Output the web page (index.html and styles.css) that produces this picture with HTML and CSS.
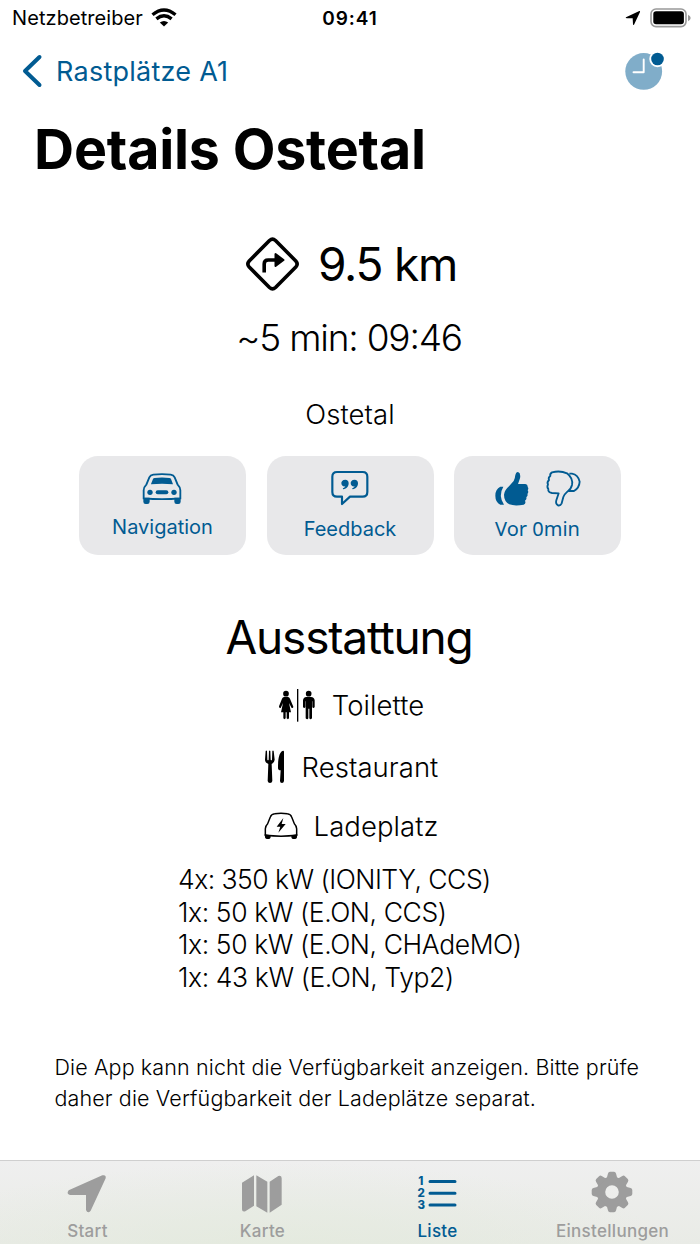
FILE: index.html
```html
<!DOCTYPE html>
<html lang="de">
<head>
<meta charset="utf-8">
<title>Details Ostetal</title>
<link rel="stylesheet" href="styles.css">
</head>
<body>
<div class="app">
  <header class="status">
    <div class="carrier"><span>Netzbetreiber</span>
      <svg width="26" height="20" viewBox="0 0 26 20" fill="none" stroke="#000" stroke-width="3.4"><path d="M1.500 6.800Q13-2.600 24.500 6.800M5.400 10.900Q13 4.800 20.600 10.900"/><path d="M13 18.500L8.800 14.400Q13 11.400 17.200 14.400Z" fill="#000" stroke="none"/></svg>
    </div>
    <div class="clock">09:41</div>
    <div class="power">
      <svg width="16" height="16" viewBox="0 0 48 48"><path d="M3 22L43 3Q46 2 45 6L27 44Q25 47 24 43L23 25L5 25Q0 24 3 22Z"/></svg>
      <svg width="41" height="20" viewBox="0 0 41 20"><rect x="1" y="1" width="35" height="17.600" rx="5" fill="none" stroke="#999" stroke-width="1.600"/><rect x="3.300" y="3.300" width="30.600" height="13" rx="2.800"/><path d="M38 6.800Q40.700 8 40.700 10T38 13.200Z" fill="#999"/></svg>
    </div>
  </header>
  <nav class="topbar">
    <a class="back"><svg width="20" height="32" viewBox="0 0 20 32" fill="none" stroke="#015b92" stroke-width="4" stroke-linecap="round" stroke-linejoin="round"><path d="M17.500 2L3 16L17.500 30"/></svg><span>Rastplätze A1</span></a>
    <svg width="40" height="40" viewBox="0 0 40 40"><circle cx="18.700" cy="20.400" r="18.400" fill="#80adc9"/><path d="M18.700 8.500V21.300H8.500" fill="none" stroke="#fff" stroke-width="1.900" stroke-linecap="round" stroke-linejoin="round"/><circle cx="32.500" cy="8" r="8.200" fill="#fff"/><circle cx="32.500" cy="8" r="6.300" fill="#015b92"/></svg>
  </nav>
  <h1 class="title">Details Ostetal</h1>
  <section class="distance">
    <svg width="53" height="54" viewBox="0 0 53 54" fill="none" stroke="#000" stroke-width="3.600" stroke-linejoin="round"><path d="M23.500 3.500Q26.500 .8 29.500 3.500L49.800 24Q52.500 27 49.800 30L29.500 50.500Q26.500 53.200 23.500 50.500L3.200 30Q.5 27 3.200 24Z"/><path d="M18.200 35.500V27Q18.200 23 22.200 23H30"/><path d="M29.500 17V29L37.500 23Z" fill="#000" stroke-width="2"/></svg>
    <span>9.5 km</span>
  </section>
  <p class="eta">~5 min: 09<span class="colon">:</span>46</p>
  <p class="place">Ostetal</p>
  <section class="actions">
    <button class="action">
      <svg class="car" width="40" height="32" viewBox="0 0 120 96" fill="#015b92"><path d="M5 72V52Q5 43 13 35L22 13Q25 6 34 5Q60 2 86 5Q95 6 98 13L107 35Q115 43 115 52V76Q60 81 5 76Z" fill="none" stroke="#015b92" stroke-width="5.500"/><path d="M27 33L33 18Q34 15 38 15Q60 12 82 15Q86 15 87 18L93 34Q60 30 27 34Z"/><circle cx="24" cy="58" r="8"/><circle cx="96" cy="58" r="8"/><rect x="41" y="52" width="38" height="12" rx="6"/><path d="M4 74H23V86Q23 93 16 93H11Q4 93 4 86ZM97 74H116V86Q116 93 109 93H104Q97 93 97 86Z"/></svg>
      <span class="label-nav">Navigation</span>
    </button>
    <button class="action">
      <svg class="bubble" width="38" height="36" viewBox="0 0 114 108" fill="#015b92"><path d="M18 6H95Q109 6 109 20V66Q109 80 95 80H57L33 102V80H18Q4 80 4 66V20Q4 6 18 6Z" fill="none" stroke="#015b92" stroke-width="6.500" stroke-linejoin="round"/><path id="quote" d="M43 29C34 29 31 35 31 39C31 46 37 51 43 49Q41 54 36 55Q34 58 38 58C50 55 53 46 53 40C53 33 49 29 43 29Z"/><use href="#quote" x="28"/></svg>
      <span class="label-feed">Feedback</span>
    </button>
    <button class="action">
      <svg class="thumbs" width="88" height="38" viewBox="0 0 264 114"><g fill="#015b92"><path d="M51 52L65 36Q69 29 70 18Q72 8 78 9Q87 12 84 28L78 45H100Q108 46 107 54Q111 58 107 64Q111 69 106 75Q109 80 103 85Q105 90 99 95Q103 104 95 107Q68 112 52 106Q36 97 36 77Q37 64 51 52Z"/><path d="M34 53Q18 80 36 107H25Q10 100 10 80Q10 60 25 53Z"/></g><g fill="none" stroke="#015b92" stroke-width="5.500" stroke-linejoin="round"><path d="M180 10Q205 4 225 13Q244 28 240 48Q237 61 226 68Q218 75 214 84L209 103Q205 111 198 109Q190 105 193 94L200 73L180 72Q167 70 169 60Q164 54 168 46Q164 40 171 33Q168 25 175 21Q173 14 180 10Z"/><path d="M232 14H240Q258 17 263 38Q262 57 246 66H229"/></g></svg>
      <span class="label-ago">Vor 0min</span>
    </button>
  </section>
  <h2 class="heading">Ausstattung</h2>
  <ul class="amenities">
    <li class="toilet"><svg width="38" height="34" viewBox="0 0 114 102"><circle cx="24" cy="14" r="8.500"/><circle cx="92" cy="14" r="8.500"/><rect x="57" y="0" width="4" height="98"/><path d="M18 24H30Q34 24 36 29L46 53Q46 58 41 57L33 42L39 70H33V88Q30 93 26 88V70H23V88Q19 93 16 88V70H9L15 42L8 57Q2 58 3 52L12 29Q14 24 18 24Z"/><path d="M85 24H99Q109 25 110 34V54Q107 59 103 55V37H102V88Q97 94 94 88V59H91V88Q88 94 83 88V37H82V55Q78 59 75 54V34Q76 25 85 24Z"/></svg><span>Toilette</span></li>
    <li class="food"><svg width="22" height="34" viewBox="0 0 66 102"><path d="M5 3Q7 0 9 3L10 29Q12 32 14 29L15 3Q17 0 19 3L20 29Q22 32 24 29L25 3Q27 0 29 3L32 29Q32 37 23 42L25 93Q24 99 18 99Q12 99 11 93L13 42Q3 37 3 29Z"/><path d="M55 3Q60 0 60 6V93Q59 99 54 99Q48 99 48 93L50 61Q42 61 42 54C42 30 44 10 55 3Z"/></svg><span>Restaurant</span></li>
    <li class="charge"><svg width="34" height="28" viewBox="0 0 102 84"><path d="M4 70V50Q4 42 11 35L19 15Q22 6 32 5Q51 2 70 5Q80 6 83 15L91 35Q98 42 98 50V70Q51 75 4 70Z" fill="none" stroke="#000" stroke-width="4.500"/><path d="M2 66L20 70V74Q20 81 12 81Q3 81 3 75ZM82 70L100 66L99 75Q99 81 90 81Q82 81 82 74Z"/><path d="M58 18L38 44H49L43 62L65 36H53Z"/></svg><span>Ladeplatz</span></li>
  </ul>
  <ul class="chargers">
    <li class="c1">4x: 350 kW (IONITY, CCS)</li>
    <li>1x: 50 kW (E.ON, CCS)</li>
    <li>1x: 50 kW (E.ON, CHAdeMO)</li>
    <li>1x: 43 kW (E.ON, Typ2)</li>
  </ul>
  <p class="note">Die App kann nicht die Verfügbarkeit anzeigen. Bitte prüfe<br>daher die Verfügbarkeit der Ladeplätze separat.</p>
  <footer class="tabs">
    <a class="tab"><svg width="42" height="44" viewBox="0 0 126 132" fill="#9d9d9d"><path d="M8 61L109 16Q121 13 119 25L74 122Q65 132 60 120V75H12Q0 72 8 61Z"/></svg><span>Start</span></a>
    <a class="tab"><svg width="42" height="44" viewBox="0 0 126 132" fill="#9d9d9d"><path d="M3 38L39 16V107L13 124Q3 127 3 118ZM46 16L79 35V128L46 109ZM86 35L112 18Q122 14 122 25V104L86 128Z"/></svg><span>Karte</span></a>
    <a class="tab active"><svg width="42" height="44" viewBox="0 0 42 44"><g stroke="#015b92" stroke-width="3" stroke-linecap="round"><path d="M14 11.400H39M14 23.200H39M14 34.900H39"/></g><g class="digits"><text x="2.200" y="15.300">1</text><text x="1.500" y="27.300">2</text><text x="1.500" y="39">3</text></g></svg><span>Liste</span></a>
    <a class="tab"><svg width="42" height="44" viewBox="-21 -22 42 44" fill="#9d9d9d"><defs><path id="tooth" d="M-5.500 -13L-4 -18.600Q-3.600 -20.300 -2 -20.300H2Q3.600 -20.300 4 -18.600L5.500 -13Z"/></defs><circle r="11.100" fill="none" stroke="#9d9d9d" stroke-width="8.600"/><use href="#tooth"/><use href="#tooth" transform="rotate(45)"/><use href="#tooth" transform="rotate(90)"/><use href="#tooth" transform="rotate(135)"/><use href="#tooth" transform="rotate(180)"/><use href="#tooth" transform="rotate(225)"/><use href="#tooth" transform="rotate(270)"/><use href="#tooth" transform="rotate(315)"/></svg><span>Einstellungen</span></a>
  </footer>
</div>
</body>
</html>
```
FILE: styles.css
```css
* { box-sizing: border-box; margin: 0; padding: 0; }
body { background: #fff; color: #000; font-family: Inter, "Liberation Sans", sans-serif; }
ul { list-style: none; }
svg { display: block; flex: none; overflow: visible; }
span, p, h1, h2, li { white-space: nowrap; }
.app { width: 700px; height: 1244px; display: flex; flex-direction: column; overflow: hidden; }

.status { height: 36px; display: grid; grid-template-columns: 1fr auto 1fr; align-items: center; padding: 0 9px 0 12px; font-size: 20px; }
.carrier { display: flex; align-items: center; gap: 8px; letter-spacing: .08px; }
.clock { font-weight: 600; font-size: 19px; letter-spacing: .9px; margin-right: 3px; }
.power { display: flex; align-items: center; justify-content: flex-end; gap: 9px; }

.topbar { height: 70px; display: flex; align-items: center; justify-content: space-between; padding: 0 35px 0 22px; color: #015b92; }
.back { display: flex; align-items: center; gap: 14px; font-size: 27px; letter-spacing: .25px; }
.title { height: 86px; line-height: 86px; margin-bottom: 2px; padding-left: 34px; font-size: 55.500px; font-weight: 700; letter-spacing: -.2px; }

.distance { height: 64px; margin-top: 38px; display: flex; align-items: center; justify-content: center; gap: 19px; padding-left: 3px; font-size: 46px; letter-spacing: -1.200px; }
.eta { height: 52px; line-height: 52px; margin-top: 16px; padding-right: 2px; text-align: center; font-size: 37px; font-weight: 300; letter-spacing: -1.200px; }
.colon { line-height: 0; vertical-align: 2px; }
.place { height: 32px; line-height: 32px; margin-top: 34px; text-align: center; font-size: 27.500px; font-weight: 300; letter-spacing: .1px; }

.actions { margin-top: 26px; display: flex; justify-content: center; gap: 20.500px; }
.action { width: 167px; height: 99px; border: 0; border-radius: 19px; background: #e8e8ea; color: #015b92; font: 400 20px Inter, sans-serif; display: flex; flex-direction: column; align-items: center; }
.action span { line-height: 24px; }
.car { margin: 17px 1px 0 0; }
.label-nav { margin-top: 10px; }
.bubble { margin-top: 14px; }
.label-feed { margin-top: 11px; }
.thumbs { margin: 13px 3px 0 0; }
.label-ago { margin-top: 10px; font-family: "Noto Sans", sans-serif; }

.heading { height: 64px; line-height: 64px; margin-top: 50px; padding-right: 2px; text-align: center; font-size: 46px; font-weight: 400; letter-spacing: -1.200px; }
.amenities { font-size: 27.500px; font-weight: 300; padding: 4px 0 0 2px; }
.amenities li { display: flex; justify-content: center; align-items: center; letter-spacing: .05px; }
.toilet { height: 64px; gap: 16px; }
.toilet svg { margin-top: 2px; }
.food { height: 60px; gap: 16px; }
.charge { height: 58px; gap: 16px; }
.chargers { margin-top: 8px; padding-left: 178px; font-size: 26.500px; font-weight: 300; line-height: 32.700px; letter-spacing: -.4px; }
.c1 { letter-spacing: -.52px; }
.note { margin-top: 58.500px; padding-left: 54.500px; font-size: 21.500px; font-weight: 300; line-height: 30.500px; letter-spacing: .12px; }

.tabs { margin-top: auto; height: 84px; border-top: 1px solid #cfcfcf; background: radial-gradient(ellipse at 40% 130%, #e3eadd 0%, rgba(227, 234, 221, 0) 70%), linear-gradient(#efefef, #e9ebe6); display: grid; grid-template-columns: repeat(4, 1fr); }
.tab { display: flex; flex-direction: column; align-items: center; padding-top: 9px; color: #9d9d9d; font-size: 17px; font-weight: 500; }
.tab svg { margin-right: 2px; }
.tab span { line-height: 24px; margin-top: 5px; letter-spacing: .3px; }
.active { color: #015b92; }
.digits { fill: #015b92; font: 800 11.500px Inter, sans-serif; }
```
